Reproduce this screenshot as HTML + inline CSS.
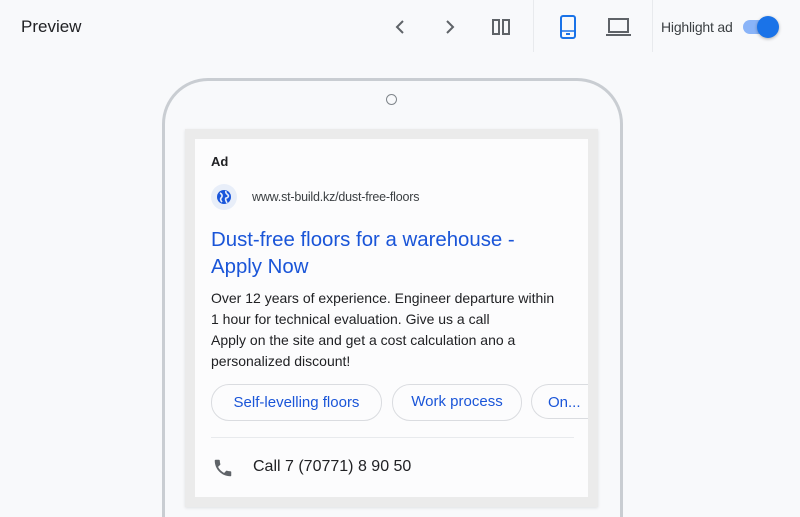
<!DOCTYPE html>
<html><head><style>
html,body{margin:0;width:800px;height:517px;overflow:hidden}
body{background:#f8f9fb;font-family:"Liberation Sans",Arial,sans-serif;position:relative;color:#202124}
.a{position:absolute}
</style></head><body>
<div class="a" style="left:21px;top:17px;font-size:17px;color:#202124">Preview</div>
<svg class="a" style="left:390px;top:17px" width="20" height="20" viewBox="0 0 20 20"><path d="M13 4L7 10L13 16" fill="none" stroke="#5f6368" stroke-width="2"/></svg>
<svg class="a" style="left:440px;top:17px" width="20" height="20" viewBox="0 0 20 20"><path d="M7 4L13 10L7 16" fill="none" stroke="#5f6368" stroke-width="2"/></svg>
<svg class="a" style="left:490px;top:17px" width="22" height="20" viewBox="0 0 22 20"><rect x="3" y="3" width="6" height="14" fill="none" stroke="#5f6368" stroke-width="2"/><rect x="13" y="3" width="6" height="14" fill="none" stroke="#5f6368" stroke-width="2"/></svg>
<div class="a" style="left:533px;top:0;width:1px;height:52px;background:#e8eaed"></div>
<svg class="a" style="left:558px;top:14px" width="22" height="26" viewBox="0 0 22 26"><rect x="3" y="2" width="14" height="22" rx="2" fill="none" stroke="#1a73e8" stroke-width="2"/><line x1="8" y1="20" x2="12" y2="20" stroke="#1a73e8" stroke-width="2"/><line x1="3" y1="17" x2="17" y2="17" stroke="#1a73e8" stroke-width="1.5"/></svg>
<svg class="a" style="left:605px;top:16px" width="28" height="22" viewBox="0 0 28 22"><rect x="4" y="3" width="19" height="13" fill="none" stroke="#5f6368" stroke-width="2"/><line x1="1" y1="19" x2="26" y2="19" stroke="#5f6368" stroke-width="2"/></svg>
<div class="a" style="left:652px;top:0;width:1px;height:52px;background:#e8eaed"></div>
<div class="a" style="left:661px;top:19px;font-size:14px;color:#3c4043;letter-spacing:-0.2px">Highlight ad</div>
<div class="a" style="left:743px;top:20px;width:34px;height:14px;border-radius:7px;background:#8ab4f8"></div>
<div class="a" style="left:757px;top:16px;width:22px;height:22px;border-radius:11px;background:#1a73e8;box-shadow:0 1px 3px rgba(0,0,0,.3)"></div>

<div class="a" style="left:162px;top:78px;width:455px;height:439px;border:3px solid #c9cdd2;border-bottom:none;border-radius:46px 46px 0 0;box-sizing:border-box;width:461px"></div>
<div class="a" style="left:386px;top:94px;width:9px;height:9px;border:1px solid #80868b;border-radius:50%"></div>
<div class="a" style="left:185px;top:129px;width:413px;height:378px;background:#ebebeb;box-shadow:0 1px 3px rgba(0,0,0,.1)"></div>
<div class="a" style="left:195px;top:139px;width:393px;height:358px;background:#fcfcfd"></div>
<div class="a" style="left:211px;top:154px;font-size:13px;font-weight:bold">Ad</div>
<div class="a" style="left:211px;top:184px;width:26px;height:26px;border-radius:50%;background:#e8eef9"></div>
<svg class="a" style="left:215px;top:188px" width="18" height="18" viewBox="0 0 18 18"><circle cx="9" cy="9" r="7" fill="#1a56db"/><path d="M5 5C7 6 8 8 6 10C5 11 6 13 7 14M11 3C10 5 12 6 13 7C14 8 13 10 11 10C10 11 11 13 12 15" fill="none" stroke="#e8eef9" stroke-width="1.6"/></svg>
<div class="a" style="left:252px;top:190px;font-size:12.5px;color:#3c4043;letter-spacing:-0.2px">www.st-build.kz/dust-free-floors</div>
<div class="a" style="left:211px;top:227px;font-size:20.4px;line-height:27px;color:#1a55d8;width:340px">Dust-free floors for a warehouse - Apply Now</div>
<div class="a" style="left:211px;top:288px;font-size:14px;line-height:21px;color:#202124;width:358px">Over 12 years of experience. Engineer departure within<br>1 hour for technical evaluation. Give us a call<br>Apply on the site and get a cost calculation ano a personalized discount!</div>
<div class="a" style="left:211px;top:384px;width:169px;height:35px;border:1px solid #dadce0;border-radius:18px;font-size:15px;color:#1a55d8;line-height:35px;text-align:center">Self-levelling floors</div>
<div class="a" style="left:392px;top:384px;width:128px;height:35px;border:1px solid #dadce0;border-radius:18px;font-size:15px;color:#1a55d8;line-height:33px;text-align:center">Work process</div>
<div class="a" style="left:531px;top:384px;width:57px;height:35px;border:1px solid #dadce0;border-right:none;border-radius:18px 0 0 18px;font-size:15px;color:#1a55d8;line-height:35px;padding-left:16px;box-sizing:border-box;overflow:hidden;white-space:nowrap">On...</div>
<div class="a" style="left:211px;top:437px;width:363px;height:1px;background:#e8eaed"></div>
<svg class="a" style="left:212px;top:457px" width="22" height="22" viewBox="0 0 24 24"><path d="M6.6 10.8c1.4 2.8 3.8 5.1 6.6 6.6l2.2-2.2c.3-.3.7-.4 1-.2 1.1.4 2.3.6 3.6.6.6 0 1 .4 1 1V20c0 .6-.4 1-1 1C10.6 21 3 13.4 3 4c0-.6.4-1 1-1h3.5c.6 0 1 .4 1 1 0 1.3.2 2.5.6 3.6.1.3 0 .7-.2 1z" fill="#5f6368"/></svg>
<div class="a" style="left:253px;top:458px;font-size:16px;color:#202124">Call 7 (70771) 8 90 50</div>
</body></html>
